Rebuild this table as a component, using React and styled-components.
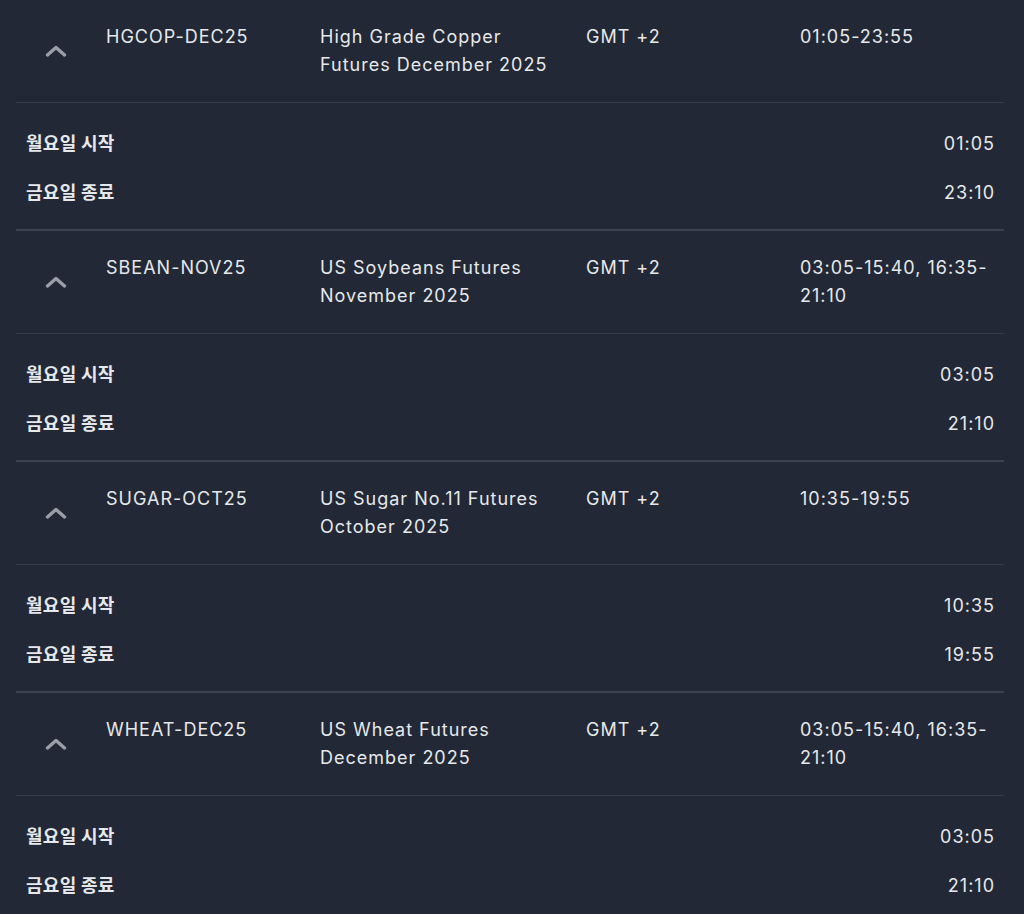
import styled, { createGlobalStyle } from 'styled-components'

const Cores = {
  fundo: '#222835',
  texto: '#e6e8eb',
  cinza: '#9a9ea7',
  linhaFina: '#363c48',
  linhaGrossa: '#3b414d',
}

const Global = createGlobalStyle`
html, body {
  margin: 0;
  padding: 0;
  background: ${Cores.fundo};
}
body {
  font-family: Inter, "Noto Sans", "Noto Sans CJK KR", sans-serif;
  color: ${Cores.texto};
}
`

const Lista = styled.div`
display: flex;
flex-direction: column;
padding: 0 20px 0 16px;
min-height: 914px;
background: ${Cores.fundo};
`

const Bloco = styled.div`
display: flex;
flex-direction: column;
border-top: ${p => (p.$primeiro ? 'none' : `2px solid ${Cores.linhaGrossa}`)};
`

const Linha = styled.div`
display: grid;
grid-template-columns: 80px 214px 266px 214px 1fr;
align-items: start;
padding: 23px 0 23px;
border-bottom: 1px solid ${Cores.linhaFina};
`

const Seta = styled.div`
display: flex;
align-items: center;
justify-content: center;
align-self: center;
height: 28px;
`

const Celula = styled.div`
padding: 0 10px;
font-size: 18px;
line-height: 28px;
letter-spacing: 1px;
`

const Detalhe = styled.div`
display: flex;
flex-direction: column;
padding: 16px 10px 12px;
`

const DetalheLinha = styled.div`
display: flex;
justify-content: space-between;
align-items: center;
height: 49px;
`

const Rotulo = styled.span`
font-family: "Noto Sans CJK KR", sans-serif;
font-weight: 700;
font-size: 18px;
letter-spacing: 0.3px;
margin-bottom: 4px;
`

const Valor = styled.span`
font-size: 18px;
letter-spacing: 1px;
margin-right: -1px;
`

const Chevron = () => (
  <svg width="22" height="12" viewBox="0 0 22 12" fill="none">
    <path d="M2.5 10 L11 2.5 L19.5 10" stroke={Cores.cinza} strokeWidth="3.4" strokeLinecap="round" strokeLinejoin="round" />
  </svg>
)

const contratos = [
  { codigo: 'HGCOP-DEC25', nome: 'High Grade Copper Futures December 2025', fuso: 'GMT +2', horas: '01:05-23:55', inicio: '01:05', fim: '23:10' },
  { codigo: 'SBEAN-NOV25', nome: 'US Soybeans Futures November 2025', fuso: 'GMT +2', horas: '03:05-15:40, 16:35-21:10', inicio: '03:05', fim: '21:10' },
  { codigo: 'SUGAR-OCT25', nome: 'US Sugar No.11 Futures October 2025', fuso: 'GMT +2', horas: '10:35-19:55', inicio: '10:35', fim: '19:55' },
  { codigo: 'WHEAT-DEC25', nome: 'US Wheat Futures December 2025', fuso: 'GMT +2', horas: '03:05-15:40, 16:35-21:10', inicio: '03:05', fim: '21:10' },
]

const App = () => {
  return (
    <>
      <Global />
      <Lista>
        {contratos.map((c, i) => (
          <Bloco key={c.codigo} $primeiro={i === 0}>
            <Linha>
              <Seta><Chevron /></Seta>
              <Celula>{c.codigo}</Celula>
              <Celula>{c.nome}</Celula>
              <Celula>{c.fuso}</Celula>
              <Celula>{c.horas}</Celula>
            </Linha>
            <Detalhe>
              <DetalheLinha>
                <Rotulo>월요일 시작</Rotulo>
                <Valor>{c.inicio}</Valor>
              </DetalheLinha>
              <DetalheLinha>
                <Rotulo>금요일 종료</Rotulo>
                <Valor>{c.fim}</Valor>
              </DetalheLinha>
            </Detalhe>
          </Bloco>
        ))}
      </Lista>
    </>
  )
}

export default App
